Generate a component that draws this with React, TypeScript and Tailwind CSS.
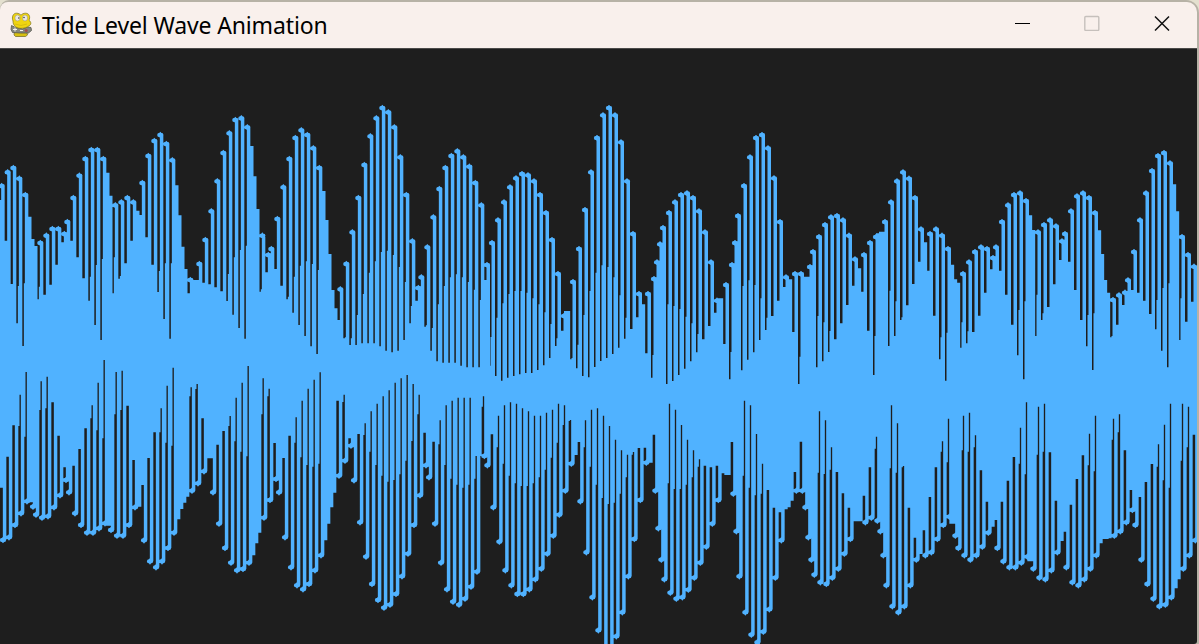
type Sample = number[];

// Coordinates are thirds of a pixel, in 300px wide sections.
// [x, tip] is a solid step; [x, tip, wide, narrow] is a rounded tip with a slit on its left.
const SOLID = 999;
const CRESTS: Sample[][] = [
  [[5,288,330],[23,247,452],[40,234,582],[58,266,588,700],[76,315,580,768],[85,380],[94,447],[103,468],[121,459,590,628],[139,437,614],[157,417,584],[175,417,524],[193,432,457],[202,396,SOLID],[220,324,452],[238,257,502],[256,207,565],[274,180,560,632],[292,180,525,705],[310,207,507,750],[319,248],[328,317],[346,346,502,610],[364,337,558,566],[382,324,520],[400,337,452],[409,362],[416,375],[427,279,SOLID],[445,198,442],[463,153,524],[481,135,543,606],[499,162,520,687],[517,211,520,746],[526,286],[535,376],[544,470],[553,537],[571,570,610],[580,570],[589,570],[598,522,SOLID],[616,450,578],[634,364,583],[652,274,592],[670,189,604],[688,130,552,633],[706,90,502,674],[724,85,480,714],[742,112,467,746],[751,168],[760,259],[769,357],[787,437,598,605],[805,495,547],[814,477,SOLID],[832,387,537],[850,292,587],[868,207,620,628],[886,144,560,668],[904,121,527,705]],
  [[22,135,514,738],[40,175,522,769],[58,234,540,792],[67,303],[76,390],[85,492],[94,600],[103,655],[121,598,690],[139,522,742,745],[157,427,745,765],[175,324,675,765],[193,225,612,760],[211,139,548,760],[229,85,514,760],[247,54,486,769],[265,67,482,782],[283,112,495,787],[301,202,531,782],[319,315,576,750],[337,454,648,700],[355,594,632],[364,562,SOLID],[382,472,706,710],[400,382,714,782],[418,297,643,814],[436,234,588,818],[454,198,562,818],[472,184,553,818],[490,202,562,827],[508,230,576,832],[526,279,599,832],[544,346,630,832],[561,525,570],[576,459,741,827],[594,391,683,858],[612,337,640,872],[630,292,612,863],[648,265,603,858],[666,252,603,853],[684,256,608,849],[702,274,625,849],[720,315,643,840],[738,369,667,826],[756,450,702,804],[774,552,745,768],[792,678,722],[801,663],[819,576,804,808],[837,477,764,835],[855,360,675,858],[873,247,603,862],[891,144,548,831]],
  [[9,76,526,813],[27,54,531,804],[45,76,562,792],[63,157,616,773],[81,274,683,746],[99,432,717],[117,612,682],[126,643],[144,612,790],[162,567,795,863],[171,517,SOLID],[180,463,SOLID],[189,414,SOLID],[207,369,643,882],[225,337,648,873],[243,315,657,855],[261,310,680,836],[279,324,700,814],[297,364,732,787],[315,427,748],[333,517,708],[351,632,668],[360,625],[378,585,762],[396,525,786,868],[405,459,SOLID],[414,378,SOLID],[432,288,588,841],[450,202,571,809],[468,144,585,787],[486,135,625,750],[504,175,683,720],[522,265,678],[540,396,632],[558,562,591],[567,568],[585,552,726],[603,552,800,882],[612,560],[621,560],[630,531,SOLID],[639,486,SOLID],[657,441,678,832],[675,405,697,814],[693,382,723,786],[711,378,748],[729,391,700],[747,437,645],[765,508,587],[774,535],[792,495,605],[810,459,722],[828,441,738,855],[837,430],[846,425],[855,396,SOLID],[873,337,602,768],[891,274,634,738]],
  [[9,247,682,690],[27,266,646],[45,324,582],[63,418,515],[72,457],[90,432,542],[108,418,677],[126,437,742,808],[144,477,728,872],[153,524],[162,568],[171,578],[189,552,697,773],[207,517,724,760],[225,486,726],[243,472,677],[261,477,608],[279,504,538],[288,472,SOLID],[306,396,542],[324,346,614],[342,315,704],[360,310,660,796],[378,333,634,868],[387,376],[396,420],[414,427,614,738],[432,405,670,690],[450,391,651],[468,409,583],[486,454,510],[495,432,SOLID],[513,364,515],[531,319,600],[549,310,690],[567,324,675,769],[585,369,670,840],[594,421],[603,492],[612,570],[621,608],[639,630,738,742],[657,616,704],[675,608,645],[684,571,SOLID],[702,486,600],[720,391,608],[738,310,632],[756,243,672],[774,198,630,718],[792,189,594,782],[810,220,580,832],[819,283],[828,364],[846,441,625,750],[864,495,695],[882,530,635]],
];
const TROUGHS: Sample[][] = [
  [[9,570,413],[27,562,320],[45,525,226],[63,490,228,134],[81,454,260,66],[90,457],[99,470,0],[108,494,0],[126,503,180,94],[144,499,175,80],[162,472,157],[180,436,257],[198,390,352],[207,427,0],[225,490,347],[243,525,297],[261,548,235],[279,548,205,166],[297,535,241,98],[315,520,265,30],[324,527],[333,540,0],[351,557,193,66],[369,557,180,62],[387,525,167],[405,472,330],[414,470],[432,571,405],[450,634,324],[468,652,247],[486,634,247,175],[504,594,278,107],[522,548,287,53],[531,508],[540,477],[549,458],[558,440],[576,422,139,112],[594,400,117,102],[612,364,205],[621,325],[639,427,325],[657,521,284],[675,594,243],[693,638,228,198],[711,661,274,143],[729,657,305,98],[747,638,319,48],[756,616],[765,580],[774,548],[792,503,193,85],[810,450,139,116],[828,387,279],[837,427,0],[855,562,324],[873,652,257],[891,706,278,202],[909,718,322,152]],
  [[27,702,345,116],[45,661,350,89],[63,616,341,67],[72,571],[81,521],[90,472],[99,428],[117,377,152],[135,332,156,134],[153,287,265],[162,391,0],[180,517,252],[198,620,255,220],[216,702,305,184],[234,750,345,161],[252,773,377,139],[270,764,395,121],[288,732,390,98],[306,679,373,85],[324,611,332,75],[342,525,273,102],[360,436,193,134],[378,346,248],[387,382,0],[405,521,275],[423,638,283,211],[441,718,345,166],[459,755,386,152],[477,764,404,143],[495,746,413,143],[513,710,404,143],[531,665,386,143],[535,318],[553,318,170,139],[562,346,0],[580,472,253],[598,575,292,197],[616,661,341,166],[634,706,377,157],[652,732,400,161],[670,732,408,175],[688,718,408,184],[706,688,400,197],[724,656,382,197],[742,611,359,188],[760,557,323,179],[778,494,278,161],[796,422,225,166],[814,341,213,210],[823,315],[841,454,276],[859,607,292,211],[877,742,350,179],[895,841,404,175]],
  [[13,900,444,197],[31,900,462,228],[49,859,458,269],[67,787,431,301],[85,679,382,314],[103,567,314,306],[121,450,294],[139,338,293],[148,338],[166,422,254],[175,535,0],[184,629,0],[193,688,0],[211,728,400,161],[229,746,417,179],[247,742,417,225],[265,719,404,269],[283,683,382,301],[301,638,350,328],[319,590,347],[337,521,352],[355,450,347],[364,366],[373,370],[382,375],[400,431,276],[409,544,0],[418,679,0],[436,787,377,152],[454,854,413,166],[472,877,436,252],[490,845,431,341],[508,778,420],[526,683,473],[544,571,487],[553,478],[562,472],[571,452],[589,422,366],[607,422,275],[616,472,0],[625,562,0],[634,629,0],[643,674,0],[661,697,368,184],[679,702,372,211],[697,683,359,292],[715,656,366],[733,611,430],[751,567,473],[760,508],[769,514],[778,514],[796,517,437],[814,503,352],[832,512,296,260],[841,544,0],[850,616,0],[859,706,0],[877,769,355,166],[895,787,368,220]],
  [[13,769,352,348],[31,706,473],[49,629,563],[58,612],[76,616,541],[94,607,441],[112,567,352],[130,525,305,274],[148,500,337,206],[157,521],[166,557,0],[175,594,0],[193,616,301,197],[211,629,305,188],[229,616,292,256],[247,590,361],[265,548,455],[274,530],[278,510],[292,594,510],[310,634,455],[328,652,392],[346,652,321],[364,638,341,233],[382,620,373,157],[391,634],[400,656,0],[418,683,314,170],[436,688,305,161],[454,661,307],[472,607,452],[481,573],[499,652,545],[517,697,464],[535,706,387],[553,688,316],[571,656,346,251],[589,616,364,197],[598,580],[607,567],[616,567],[625,565],[643,557,269,206],[661,544,247,193],[679,517,301],[697,480,420],[706,525,0],[724,629,441],[742,702,396],[760,746,342],[778,769,350,283],[796,764,391,224],[814,742,413,161],[823,715],[832,688],[850,656,332,161],[868,616,292,170],[886,571,254]],
];

const box = (x: number, y1: number, w: number, y2: number) =>
  y2 > y1 ? `M${x} ${y1}h${w}V${y2}h${-w}z` : "";
const tip = (x: number, y: number) => `M${x - 9.5} ${y}l2 -5l4 -1l3.500 -4l3.500 4l4 1l2 5l-2 5l-4 1l-3.500 4l-3.500 -4l-4 -1z`;

// The still-water line steps down along the width.
const restLevel = (x: number) => (x < 990 ? 1071 : x < 1305 ? 1098 : 1170);

function buildWave() {
  let d = "";
  CRESTS.forEach((section, i) =>
    section.forEach(([sx, sy, wide, narrow]) => {
      const x = sx + i * 900;
      const y = sy + 270;
      const rest = restLevel(x);
      if (wide === undefined) {
        d += box(x - 9, y, 18.5, rest);
        return;
      }
      d += box(x - 1.5, y, 10.5, rest) + tip(x, y);
      if (wide !== SOLID) {
        d += box(x - 4.5, wide + 270, 4, rest) + box(x - 10, (narrow ?? wide) + 270, 6.5, rest);
      }
    }),
  );
  TROUGHS.forEach((section, i) =>
    section.forEach(([sx, sy, wide, narrow]) => {
      const x = sx + i * 900;
      const y = sy + 1050;
      const rest = restLevel(x - 60) - 1;
      if (wide === undefined) {
        d += box(x - 9, rest, 19, y);
        return;
      }
      d += box(x - 0.5, rest, 10.5, y) + tip(x, y);
      if (wide !== 0) {
        d += box(x - 9, rest, 4.5, wide + 1050) + box(x - 5, rest, 5, (narrow ?? wide) + 1050);
      }
    }),
  );
  return d;
}

const WAVE = buildWave();

function SnakeIcon() {
  return (
    <svg className="h-[26px] w-[24px] shrink-0" viewBox="0 0 24 26">
      <path d="M5.500 19h12l1 4-2 1.500H6.500L5 23z" fill="#d8c010" stroke="#6b6428" strokeWidth=".7" />
      <path d="M2.500 13.500l3 1.500 8 2 5-2 3.500.5.500 3-3 2.500-8 0-8-.5-1.500-3z" fill="#85877f" stroke="#55574f" strokeWidth=".8" />
      <path d="M4 9C2.500 5 4 1.200 7.500 1.200c2.200 0 3.500 1 4.500 2 1-1.200 2.500-2 4.500-2 4 0 5 4 3.500 7 2.500 2 2.500 4.500-.5 6-3 2.500-10 3-13 .5-2-1.500-2.500-3.500-2.500-5.700z" fill="#f0d510" stroke="#7a7018" strokeWidth=".7" />
      <ellipse cx="8.500" cy="6" rx="2.600" ry="3" fill="#e9e7e4" stroke="#98905a" strokeWidth=".5" />
      <ellipse cx="16" cy="6" rx="2.600" ry="3" fill="#e9e7e4" stroke="#98905a" strokeWidth=".5" />
      <circle cx="9.800" cy="6" r=".8" fill="#444" />
      <circle cx="15" cy="5.500" r=".8" fill="#444" />
      <path d="M6 12q6 3 12 0" fill="none" stroke="#d3b70c" strokeWidth=".8" />
      <circle cx="17.200" cy="18.500" r="1.500" fill="#a54d4d" />
      <path d="M4 17.500h4M6 15.500v4M11 18.500h3" stroke="#f3f3ee" strokeWidth="1" />
    </svg>
  );
}

export default function App() {
  return (
    <div className="h-[644px] w-[1199px] overflow-hidden bg-[#e4e0cf]">
      <div className="flex h-full flex-col rounded-tl-[9px] rounded-tr-[13px] bg-[#b7b2a6] pr-[2px] pt-[2px]">
        <header className="flex h-[46px] shrink-0 items-center rounded-tl-[8px] rounded-tr-[10px] bg-[#f9f0ec] pl-[9px]">
          <SnakeIcon />
          <h1 className="ml-[9px] grow whitespace-nowrap font-['Noto_Sans',sans-serif] text-[23px] leading-none tracking-[-0.14px] text-black">
            Tide Level Wave Animation
          </h1>
          <div className="flex items-center gap-[53px] pb-[4px] pr-[27px]">
            <svg className="size-[16px]" viewBox="0 0 16 16"><path d="M0 8.500h15" stroke="#000" /></svg>
            <svg className="size-[16px]" viewBox="0 0 16 16"><rect x=".8" y="1.500" width="14" height="14" rx="1" fill="none" stroke="#c6c0bc" strokeWidth="1.400" /></svg>
            <svg className="ml-[1px] size-[16px]" viewBox="0 0 16 16"><path d="M1 1.500l14 14M15 1.500L1 15.500" stroke="#111" strokeWidth="1.500" /></svg>
          </div>
        </header>
        <main className="grow overflow-hidden rounded-br-[3px] border-t border-[#4b4a49] bg-[#1e1e1e]">
          <svg className="block h-[595px] w-[1197px]" viewBox="0 147 3591 1785">
            <path d={WAVE} fill="#50b2ff" />
          </svg>
        </main>
      </div>
    </div>
  );
}
